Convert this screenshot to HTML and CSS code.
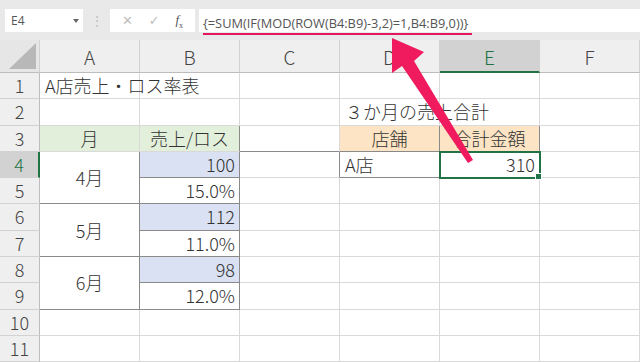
FILE: index.html
```html
<!DOCTYPE html>
<html lang="ja">
<head>
    <meta charset="UTF-8">
    <title>A店売上・ロス率表</title>
    <link rel="stylesheet" href="styles.css">
</head>
<body>
    <div class="bar">
        <div class="namebox">E4<span class="drop"></span></div>
        <div class="dots">⋮</div>
        <div class="buttons">
            <span class="btn">✕</span>
            <span class="btn">✓</span>
            <span class="btn fx"><i>f</i><sub>x</sub></span>
        </div>
        <div class="formula"><span class="ftext">{=SUM(IF(MOD(ROW(B4:B9)-3,2)=1,B4:B9,0))}</span></div>
    </div>

    <div class="sheet">
        <div class="c h corner"><span class="tri"></span></div>
        <div class="c h">A</div>
        <div class="c h">B</div>
        <div class="c h">C</div>
        <div class="c h">D</div>
        <div class="c h sel">E</div>
        <div class="c h">F</div>

        <div class="c rh">1</div>
        <div class="c txt over">A店売上・ロス率表</div>
        <div class="c"></div><div class="c"></div><div class="c"></div><div class="c"></div><div class="c"></div>

        <div class="c rh">2</div>
        <div class="c"></div><div class="c"></div><div class="c"></div>
        <div class="c txt over">３か月の売上合計</div>
        <div class="c"></div><div class="c"></div>

        <div class="c rh">3</div>
        <div class="c green ctr">月</div>
        <div class="c green ctr dr">売上/ロス</div>
        <div class="c db"></div>
        <div class="c tan ctr dr db">店舗</div>
        <div class="c tan ctr dr db">合計金額</div>
        <div class="c"></div>

        <div class="c rh rsel">4</div>
        <div class="c ctr span2 dr db">4月</div>
        <div class="c blue num dr db">100</div>
        <div class="c dr"></div>
        <div class="c txt dr db">A店</div>
        <div class="c num active">310<span class="handle"></span></div>
        <div class="c"></div>

        <div class="c rh">5</div>
        <div class="c num dr db">15.0%</div>
        <div class="c"></div><div class="c"></div><div class="c"></div><div class="c"></div>

        <div class="c rh">6</div>
        <div class="c ctr span2 dr db">5月</div>
        <div class="c blue num dr db">112</div>
        <div class="c"></div><div class="c"></div><div class="c"></div><div class="c"></div>

        <div class="c rh">7</div>
        <div class="c num dr db">11.0%</div>
        <div class="c"></div><div class="c"></div><div class="c"></div><div class="c"></div>

        <div class="c rh">8</div>
        <div class="c ctr span2 dr db">6月</div>
        <div class="c blue num dr db">98</div>
        <div class="c"></div><div class="c"></div><div class="c"></div><div class="c"></div>

        <div class="c rh">9</div>
        <div class="c num dr db">12.0%</div>
        <div class="c"></div><div class="c"></div><div class="c"></div><div class="c"></div>

        <div class="c rh">10</div>
        <div class="c"></div><div class="c"></div><div class="c"></div><div class="c"></div><div class="c"></div><div class="c"></div>

        <div class="c rh">11</div>
        <div class="c"></div><div class="c"></div><div class="c"></div><div class="c"></div><div class="c"></div><div class="c"></div>

        <svg class="arrow" width="640" height="362" viewBox="0 0 640 362">
            <polygon points="392,38 424,52 414,61 473,160 468,163 402,66 392,73" fill="#ef1b5e"/>
        </svg>
    </div>
</body>
</html>
```

FILE: styles.css
```css
body {
    margin: 0;
    width: 640px;
    height: 362px;
    overflow: hidden;
    background: #fff;
    font-family: "Noto Sans CJK JP", "Noto Sans", sans-serif;
}

.bar {
    height: 40px;
    background: #e9e9e9;
    display: flex;
    align-items: flex-start;
    padding-top: 9px;
    box-sizing: border-box;
}

.namebox {
    width: 78px;
    height: 23px;
    margin-left: 5px;
    background: #fff;
    font-family: "Open Sans", sans-serif;
    font-size: 12px;
    color: #555;
    line-height: 23px;
    padding-left: 6px;
    box-sizing: border-box;
    position: relative;
}

.drop {
    position: absolute;
    right: 4px;
    top: 10px;
    border-left: 3px solid transparent;
    border-right: 3px solid transparent;
    border-top: 4px solid #666;
}

.dots {
    width: 27px;
    text-align: center;
    color: #c2c2c2;
    font-size: 14px;
    line-height: 23px;
}

.buttons {
    width: 85px;
    height: 23px;
    background: #fff;
    display: flex;
    align-items: center;
    justify-content: space-around;
    padding: 0 4px;
    box-sizing: border-box;
}

.btn {
    color: #bdbdbd;
    font-size: 13px;
    font-family: "DejaVu Sans", sans-serif;
}

.fx {
    color: #555;
    font-family: "Liberation Serif", serif;
    font-size: 13px;
}

.fx sub {
    font-size: 8px;
}

.formula {
    flex: 1;
    height: 23px;
    margin-left: 4px;
    background: #fff;
    padding-left: 4px;
}

.ftext {
    display: inline-block;
    font-family: "Open Sans", sans-serif;
    font-size: 12.8px;
    color: #555;
    line-height: 20px;
    border-bottom: 2px solid #e21760;
    padding-right: 4px;
}

.sheet {
    display: grid;
    grid-template-columns: 40px repeat(6, 100px);
    grid-template-rows: 33px repeat(11, 26.3px);
    position: relative;
}

.c {
    border-right: 1px solid #d9d9d9;
    border-bottom: 1px solid #d9d9d9;
    box-sizing: border-box;
    font-size: 18px;
    font-weight: 300;
    color: #333;
    line-height: 25px;
    white-space: nowrap;
    position: relative;
}

.h {
    background: #efefef;
    border-right-color: #d2d2d2;
    border-bottom-color: #bdbdbd;
    text-align: center;
    font-size: 19px;
    line-height: 34px;
    color: #444;
}

.corner {
    background: #e6e6e6;
}

.tri {
    position: absolute;
    right: 3px;
    bottom: 3px;
    border-left: 27px solid transparent;
    border-bottom: 26px solid #b8b8b8;
}

.sel {
    background: #d2d2d2;
    color: #217346;
    border-bottom: 2px solid #217346;
}

.rh {
    background: #efefef;
    border-right-color: #bdbdbd;
    border-bottom-color: #d2d2d2;
    text-align: center;
    color: #444;
}

.rsel {
    background: #d2d2d2;
    color: #217346;
    border-right: 2px solid #217346;
}

.txt {
    padding-left: 5px;
}

.over {
    overflow: visible;
    z-index: 1;
}

.ctr {
    text-align: center;
}

.num {
    text-align: right;
    padding-right: 4px;
}

.span2 {
    grid-row: span 2;
    display: flex;
    align-items: center;
    justify-content: center;
}

.green {
    background: #e2efda;
}

.blue {
    background: #d9e1f2;
}

.tan {
    background: #fce4c4;
}

.dr {
    border-right-color: #8a8a8a;
}

.db {
    border-bottom-color: #8a8a8a;
}

.active {
    outline: 2px solid #217346;
    outline-offset: -1px;
    z-index: 2;
}

.handle {
    position: absolute;
    right: -3px;
    bottom: -3px;
    width: 5px;
    height: 5px;
    background: #217346;
    border: 1px solid #fff;
}

.arrow {
    position: absolute;
    left: 0;
    top: -40px;
    z-index: 5;
    pointer-events: none;
}
```
